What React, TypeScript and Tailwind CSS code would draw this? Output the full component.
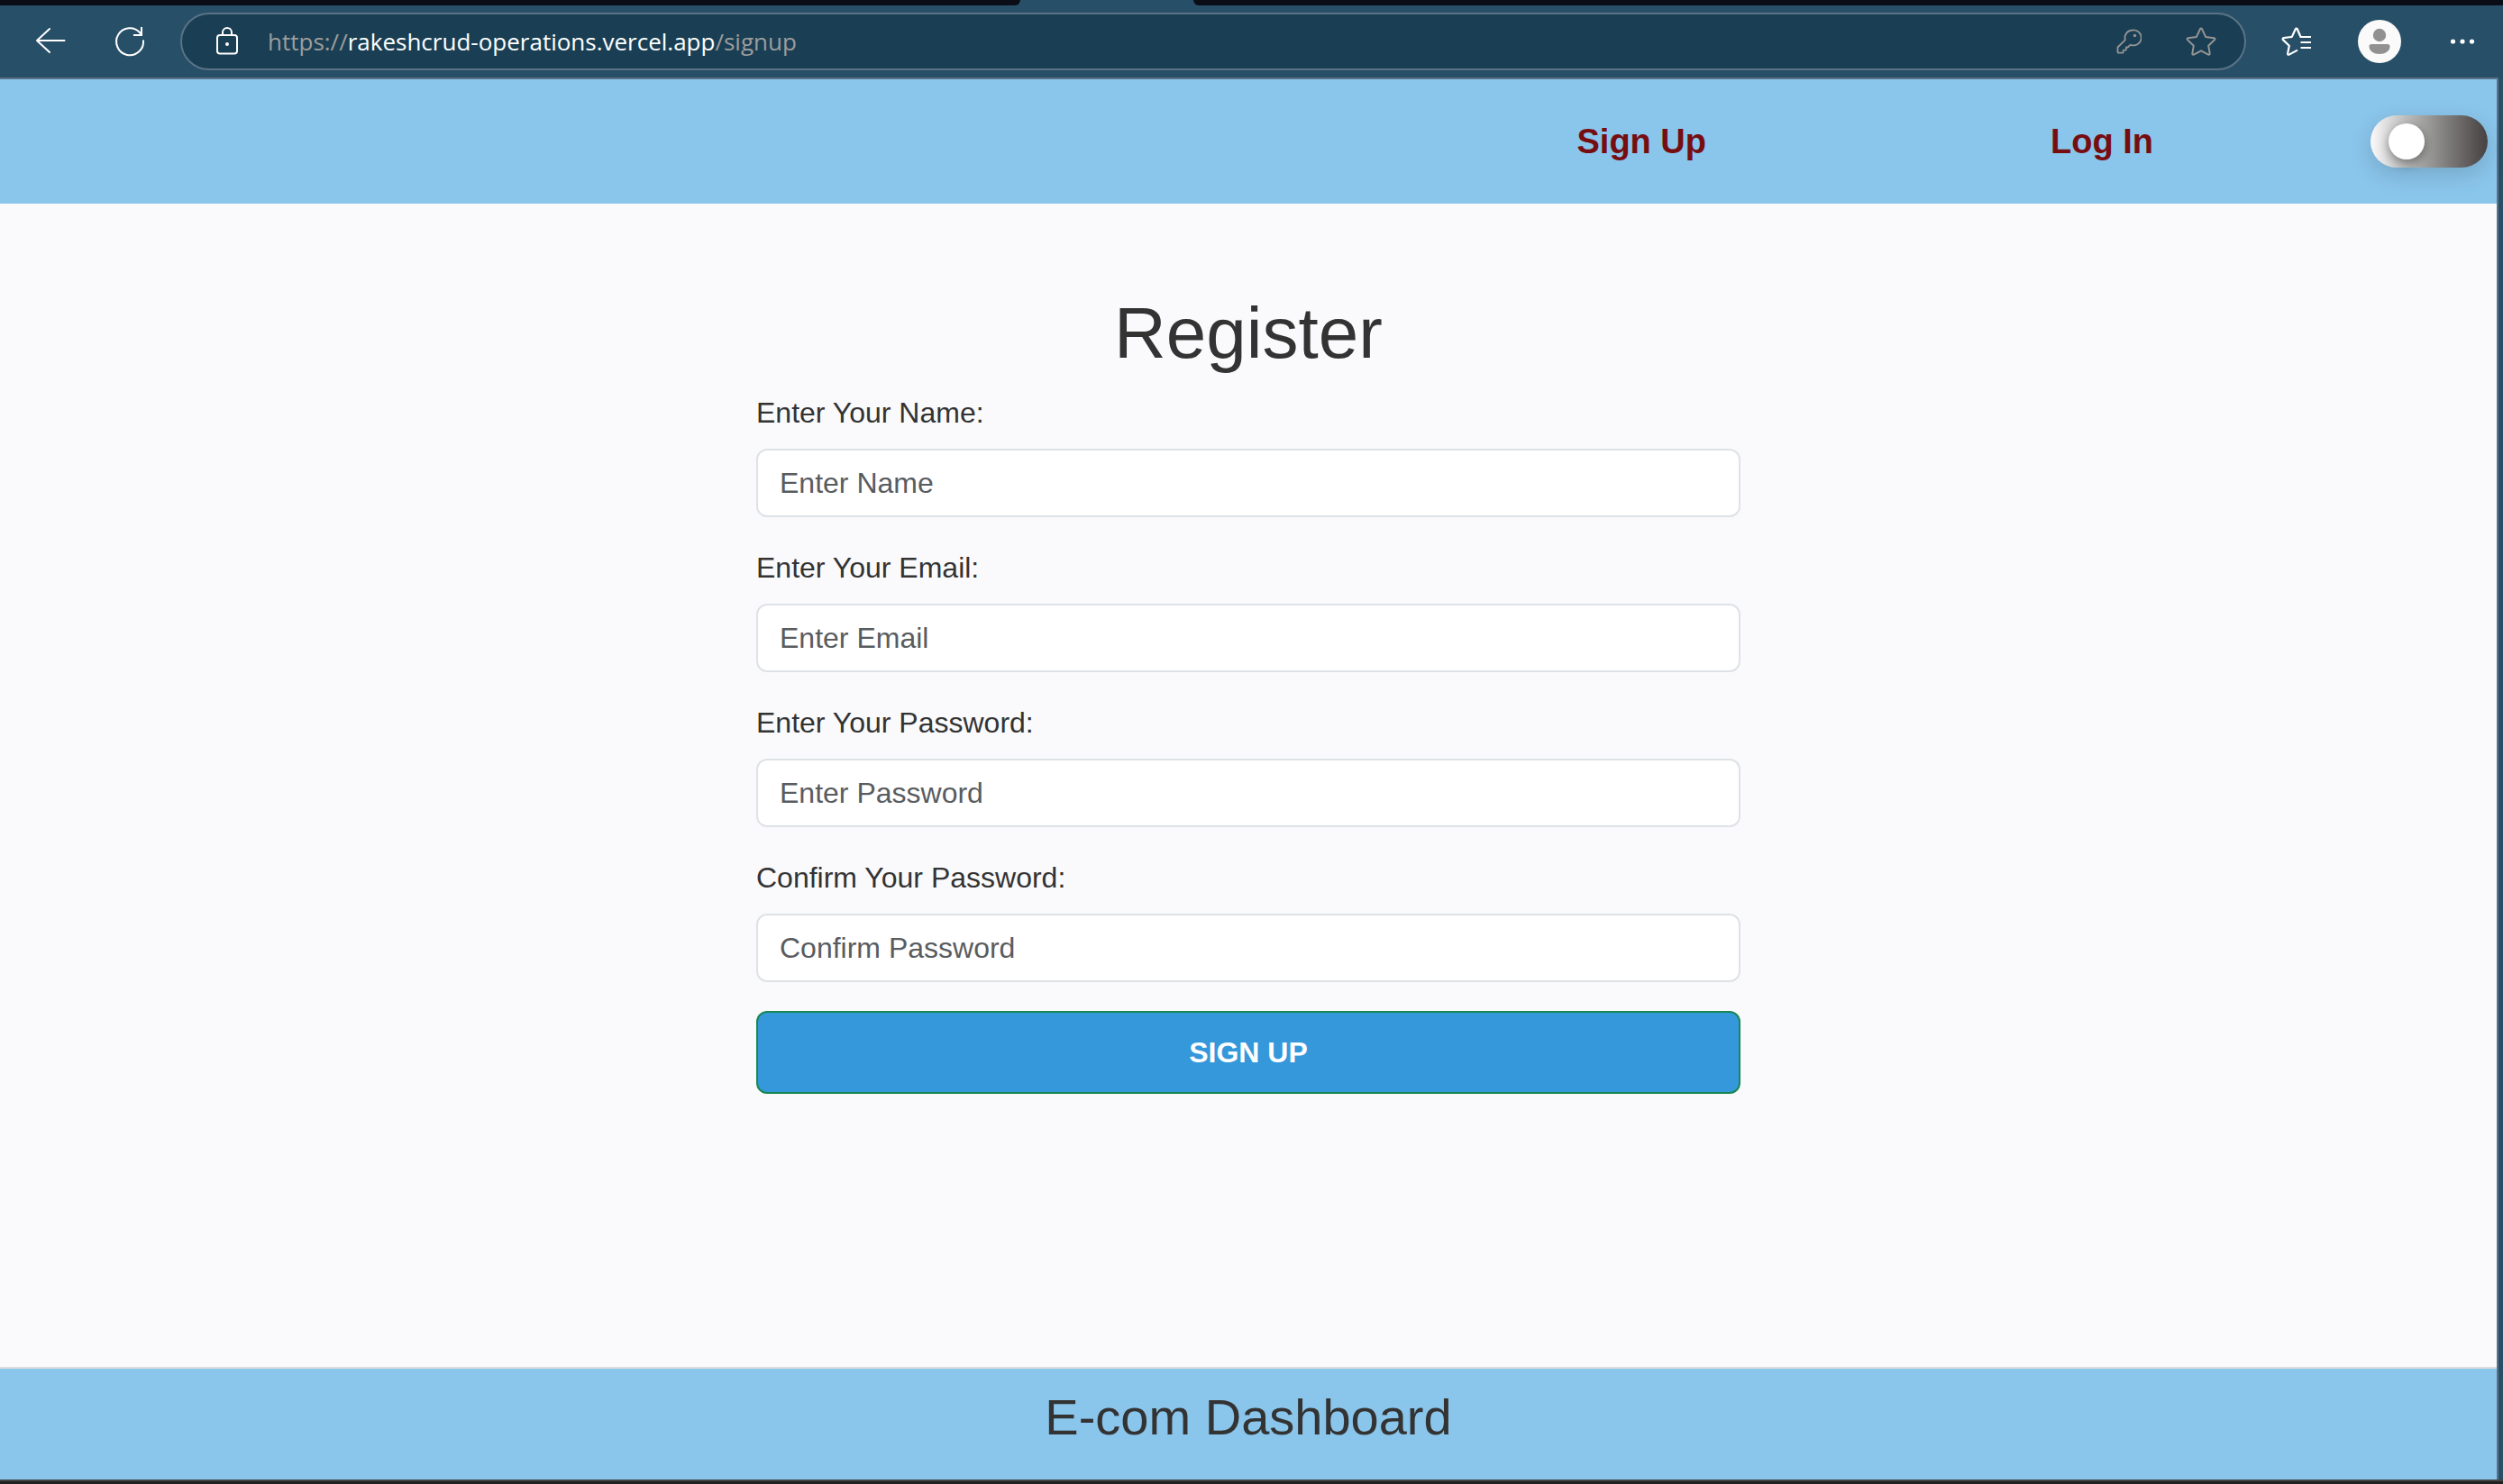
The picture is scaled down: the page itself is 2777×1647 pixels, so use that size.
import { useState } from "react";

const fields = [
  { id: "name", label: "Enter Your Name:", placeholder: "Enter Name", type: "text" },
  { id: "email", label: "Enter Your Email:", placeholder: "Enter Email", type: "email" },
  { id: "password", label: "Enter Your Password:", placeholder: "Enter Password", type: "password" },
  { id: "confirm", label: "Confirm Your Password:", placeholder: "Confirm Password", type: "password" },
];

function BackIcon() {
  return (
    <svg viewBox="0 0 36 36" className="size-9" fill="none" stroke="currentColor" strokeWidth="2" strokeLinecap="round" strokeLinejoin="round" aria-hidden="true">
      <path d="M33.500 17H3M17 4 3 17l14 13" />
    </svg>
  );
}

function ReloadIcon() {
  return (
    <svg viewBox="0 0 36 36" className="size-9" fill="none" stroke="currentColor" strokeWidth="2" strokeLinejoin="miter" aria-hidden="true">
      <path d="M33 16.500A15 15 0 1 1 29.500 8.500L31 11" />
      <path d="M31 2v9h-9" />
    </svg>
  );
}

function LockIcon() {
  return (
    <svg viewBox="0 0 26 32" className="h-8 w-[26px]" fill="none" stroke="currentColor" strokeWidth="2" aria-hidden="true">
      <rect x="2" y="9" width="22" height="20.500" rx="3" />
      <path d="M8 9V6a5 5 0 0 1 10 0v3" />
      <circle cx="13" cy="19" r="2" fill="currentColor" stroke="none" />
    </svg>
  );
}

function KeyIcon() {
  return (
    <svg viewBox="0 0 28 28" className="size-7" fill="none" stroke="currentColor" strokeWidth="1.800" strokeLinejoin="round" aria-hidden="true">
      <path d="M18 1.500a8.500 8.500 0 0 0-8.200 10.800L1.500 20.500v5.200a1 1 0 0 0 1 1h4.200a1 1 0 0 0 1-1v-2h2.200a1 1 0 0 0 1-1v-2.200h1.800l3.100-2.800A8.500 8.500 0 1 0 18 1.500Z" />
      <circle cx="20.500" cy="7.500" r="1.700" fill="currentColor" stroke="none" />
    </svg>
  );
}

function StarIcon() {
  return (
    <svg viewBox="0 0 34 32" className="h-8 w-[34px]" fill="none" stroke="currentColor" strokeWidth="2" strokeLinejoin="round" aria-hidden="true">
      <path d="M16 2.200a1.100 1.100 0 0 1 2 0l4.100 8.700 9.400 1.300a1.100 1.100 0 0 1 .6 1.900l-6.900 6.600 1.500 8.700a1.100 1.100 0 0 1-1.600 1.200L17 26.300l-8.100 4.300a1.100 1.100 0 0 1-1.600-1.200l1.500-8.700-6.900-6.600a1.100 1.100 0 0 1 .6-1.900l9.400-1.300Z" />
    </svg>
  );
}

function FavoritesIcon() {
  return (
    <svg viewBox="0 0 34 32" className="h-8 w-[34px]" fill="none" stroke="currentColor" strokeWidth="2.200" strokeLinejoin="round" aria-hidden="true">
      <path d="M33 11H21.500L17.800 2.200a1.100 1.100 0 0 0-2 0l-4 8.700-9.300 1.300a1.100 1.100 0 0 0-.6 1.900l6.900 6.600-1.700 8.700a1.100 1.100 0 0 0 1.600 1.200l9.300-5" />
      <path d="M21.500 17H33M21.500 23H33" />
    </svg>
  );
}

function BrowserBar() {
  return (
    <header className="flex h-20 items-center bg-[#284f68] pl-[38px] pr-[31px] text-white">
      <button type="button" aria-label="Back" className="mr-[52px]"><BackIcon /></button>
      <button type="button" aria-label="Refresh" className="mr-[38px]"><ReloadIcon /></button>
      <div className="flex h-16 flex-1 items-center rounded-full border-2 border-[#5a7386] bg-[#1a3f54] pl-[37px] pr-[31px]">
        <LockIcon />
        <a href="#signup" className="ml-8 flex-1 font-['Open_Sans',sans-serif] text-[26px] leading-10 text-[#9d9d9d]">
          https://<span className="text-white">rakeshcrud-operations.vercel.app</span>/signup
        </a>
        <button type="button" aria-label="Passwords" className="mr-[49px] text-[#949494]"><KeyIcon /></button>
        <button type="button" aria-label="Add to favorites" className="text-[#949494]"><StarIcon /></button>
      </div>
      <button type="button" aria-label="Favorites" className="ml-[39px]"><FavoritesIcon /></button>
      <button type="button" aria-label="Profile" className="ml-[51px]">
        <svg viewBox="0 0 48 48" className="size-12" aria-hidden="true">
          <circle cx="24" cy="24" r="24" fill="#fafafa" />
          <circle cx="24" cy="17" r="7.200" fill="#919191" />
          <path d="M15 27h18a2.500 2.500 0 0 1 2.500 2.500C35.500 35 30 38 24 38s-11.500-3-11.500-8.500A2.500 2.500 0 0 1 15 27Z" fill="#919191" />
        </svg>
      </button>
      <button type="button" aria-label="Settings and more" className="ml-[54px]">
        <svg viewBox="0 0 28 28" className="size-7" fill="currentColor" aria-hidden="true">
          <circle cx="3.500" cy="14" r="2.600" />
          <circle cx="14" cy="14" r="2.600" />
          <circle cx="24.500" cy="14" r="2.600" />
        </svg>
      </button>
    </header>
  );
}

function TabStrip() {
  return (
    <div className="flex h-1.5 bg-[#284f68]">
      <div className="w-[1132px] rounded-br-lg bg-[#0b0d16]" />
      <div className="w-[192px]" />
      <div className="flex-1 rounded-bl-lg bg-[#0b0d16]" />
    </div>
  );
}

function ThemeToggle() {
  const [dark, setDark] = useState(false);
  return (
    <label className="flex h-[58px] w-[130px] cursor-pointer items-center rounded-full bg-linear-to-r from-[#fbf9fa] via-[#999998] to-[#474141] px-5 shadow-[0_8px_24px_rgba(0,0,0,0.15)]">
      <input type="checkbox" aria-label="Dark mode" checked={dark} onChange={() => setDark(!dark)} className="peer sr-only" />
      <span className="size-10 rounded-full bg-white shadow-[0_4px_12px_rgba(0,0,0,0.4)] peer-checked:ml-auto" />
    </label>
  );
}

export default function App() {
  return (
    <div className="flex min-h-screen flex-col bg-[#284f68] font-['Liberation_Sans',Arial,sans-serif] text-[#333333]">
      <TabStrip />
      <BrowserBar />
      <div className="mr-[5px] flex flex-1 flex-col border-r-2 border-t-2 border-[#5a7386] bg-[#fafafc]">
        <nav className="flex h-[138px] items-center justify-end bg-[#8ac5eb] pr-2.5 text-[38px] font-bold text-[#760d10]">
          <a href="#signup" className="px-[191px]">Sign Up</a>
          <a href="#login" className="px-[191px]">Log In</a>
          <div className="ml-[50px]"><ThemeToggle /></div>
        </nav>
        <main className="flex-1 pt-24 text-[32px] leading-[48px]">
          <form className="mx-auto w-full max-w-[1092px]" onSubmit={(e) => e.preventDefault()}>
            <h1 className="mb-4 text-center text-[80px] leading-[96px]">Register</h1>
            {fields.map((f) => (
              <div key={f.id} className="mb-8">
                <label htmlFor={f.id} className="mb-4 block">{f.label}</label>
                <input id={f.id} type={f.type} placeholder={f.placeholder} className="block h-[76px] w-full rounded-xl border-2 border-[#dee2e6] bg-white px-6 placeholder:text-[#595c5f]" />
              </div>
            ))}
            <button type="submit" className="w-full rounded-xl border-2 border-[#198754] bg-[#3498db] py-5 font-bold text-white">SIGN UP</button>
          </form>
        </main>
        <footer className="h-[125px] border-t-2 border-[#dddddd] bg-[#8ac5eb] pt-5 text-center text-[56px] leading-[67px]">E-com Dashboard</footer>
      </div>
      <div className="h-[5px] border-t-2 border-[#444444] bg-[#202020]" />
    </div>
  );
}
